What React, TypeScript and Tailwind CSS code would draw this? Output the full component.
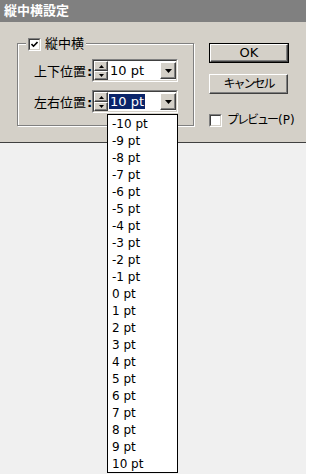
import React from "react";

const font = "font-['DejaVu_Sans','Noto_Sans_CJK_JP',sans-serif]";

function Raised({ className = "", children }: { className?: string; children?: React.ReactNode }) {
  return (
    <div
      className={`bg-[#d4d0c8] border border-t-white border-l-white border-b-[#404040] border-r-[#404040] shadow-[inset_-1px_-1px_0_#808080] flex items-center justify-center ${className}`}
    >
      {children}
    </div>
  );
}

function Tri({ up = false, w = 7, h = 4 }: { up?: boolean; w?: number; h?: number }) {
  return (
    <svg width={w} height={h} viewBox={`0 0 ${w} ${h}`}>
      <polygon points={up ? `0,${h} ${w},${h} ${w / 2},0` : `0,0 ${w},0 ${w / 2},${h}`} fill="#000" />
    </svg>
  );
}

function Check({ checked }: { checked?: boolean }) {
  return (
    <div className="w-[13px] h-[13px] shrink-0 border border-t-[#808080] border-l-[#808080] border-b-white border-r-white">
      <div className="w-full h-full bg-white border border-t-[#404040] border-l-[#404040] border-b-[#d4d0c8] border-r-[#d4d0c8] flex items-center justify-center">
        {checked && (
          <svg width="7" height="7" viewBox="0 0 7 7">
            <polyline points="0.5,3 2.5,5.2 6.5,1" fill="none" stroke="#000" strokeWidth="1.6" />
          </svg>
        )}
      </div>
    </div>
  );
}

function Combo({ selected }: { selected?: boolean }) {
  return (
    <div className="w-[86px] h-[23px] shrink-0 border border-t-[#808080] border-l-[#808080] border-b-white border-r-white">
      <div className="w-full h-full flex border border-t-[#404040] border-l-[#404040] border-b-[#d4d0c8] border-r-[#d4d0c8]">
        <div className="w-[14px] flex flex-col">
          <Raised className="h-[10px]">
            <Tri up w={5} h={3} />
          </Raised>
          <Raised className="h-[9px]">
            <Tri w={5} h={3} />
          </Raised>
        </div>
        <div className="flex-1 bg-white flex items-center pl-[1px]">
          <span className="flex-1 text-[13px] leading-[16px] text-black whitespace-nowrap">
            <span className={selected ? "bg-[#0a246a] text-white px-[1px]" : "px-[1px]"}>10 pt</span>
          </span>
          <Raised className="w-[16px] h-[17px]">
            <Tri />
          </Raised>
        </div>
      </div>
    </div>
  );
}

function Row({ label, selected }: { label: string; selected?: boolean }) {
  return (
    <div className="flex items-center h-[23px]">
      <div className="w-[58px] shrink-0 flex items-center text-[13px] text-black pt-[3px] whitespace-nowrap">
        <span>{label}</span>
        <span className="ml-[1px] font-bold">:</span>
      </div>
      <Combo selected={selected} />
    </div>
  );
}

export default function App() {
  const values = Array.from({ length: 21 }, (_, i) => i - 10);
  return (
    <div className={`relative w-[306px] h-[474px] bg-[#f0f0f0] ${font}`}>
      <div className="bg-[#d4d0c8] border-b border-[#404040]">
        <div className="h-[22px] bg-[#808080] flex items-center pl-[4px] text-white font-bold text-[13px]">
          縦中横設定
        </div>
        <div className="h-[120px] flex pl-[17px] pt-[21px]">
          <div className="relative w-[177px] h-[83px] border border-[#808080] shadow-[inset_1px_1px_0_#fff,1px_1px_0_#fff]">
            <div className="absolute left-[8px] top-[-8px] bg-[#d4d0c8] flex items-center gap-[4px] px-[2px]">
              <Check checked />
              <span className="text-[13px] leading-[16px] text-black whitespace-nowrap">縦中横</span>
            </div>
            <div className="flex flex-col gap-[8px] pt-[15px] pl-[16px]">
              <Row label="上下位置" />
              <Row label="左右位置" selected />
            </div>
          </div>
          <div className="ml-[15px] flex flex-col">
            <div className="w-[80px] h-[20px] border border-black">
              <Raised className="w-full h-full text-[13px] text-black">OK</Raised>
            </div>
            <Raised className="mt-[11px] w-[79px] h-[20px] text-[12px] text-black tracking-[-2px] whitespace-nowrap">
              キャンセル
            </Raised>
            <div className="mt-[17px] flex items-center gap-[5px]">
              <Check />
              <span className="text-[12px] text-black whitespace-nowrap">
                <span className="tracking-[-2px]">プレビュー</span>
                <span className="ml-[1px]">(P)</span>
              </span>
            </div>
          </div>
        </div>
      </div>
      <div className="absolute left-[107px] top-[114px] w-[71px] border border-black bg-white">
        {values.map((v) => (
          <div key={v} className="h-[17px] flex items-center pl-[4px] text-[12px] text-black">
            {v} pt
          </div>
        ))}
      </div>
    </div>
  );
}
